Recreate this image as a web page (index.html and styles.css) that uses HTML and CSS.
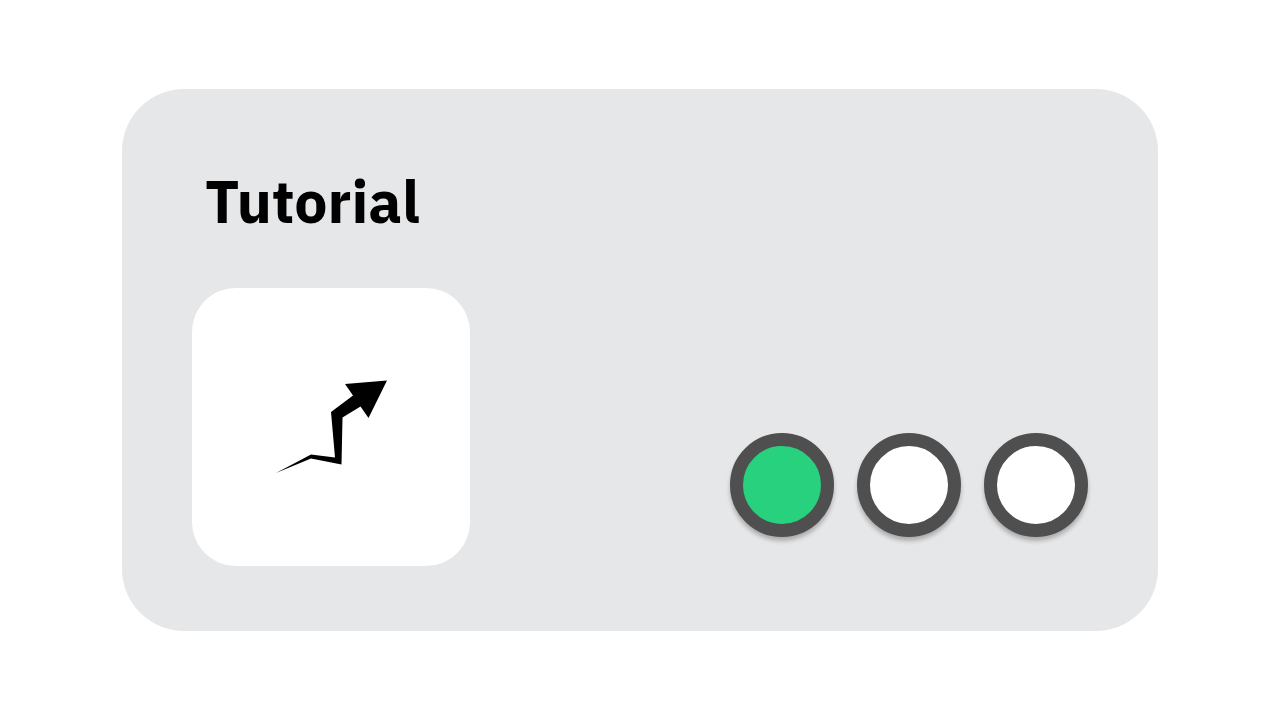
FILE: index.html
```
<!DOCTYPE html>
<html lang="en">
<head>
    <meta charset="UTF-8">
    <meta name="viewport" content="width=device-width, initial-scale=1.0">
    <title>Tutorial</title>
    <link rel="stylesheet" href="styles.css">
</head>
<body>

<main class="card">
    <h1>Tutorial</h1>
    <div class="card-content">
        <div class="tile">
            <svg class="arrow" viewBox="0 0 112 94" aria-hidden="true">
                <path d="M1 93 L36 74.500 L60 77.500 L56 32 L78 15.500 L70 4 L112 0.500 L93.500 38 L85.500 26.500 L67.500 37.500 L66.500 84.500 L36 78.500 Z"/>
            </svg>
        </div>
        <ol class="steps">
            <li class="step done" aria-label="Step 1"></li>
            <li class="step" aria-label="Step 2"></li>
            <li class="step" aria-label="Step 3"></li>
        </ol>
    </div>
</main>

</body>
</html>
```

FILE: styles.css
```
body {
    font-family: "IBM Plex Sans", Inter, "Liberation Sans", sans-serif;
    margin: 0;
    min-height: 100vh;
    display: flex;
    align-items: center;
    background-color: #fff;
}

.card {
    flex: 1;
    box-sizing: border-box;
    margin: 0 122px;
    padding: 72px 70px 65px;
    border-radius: 62px;
    background-color: #e6e7e9;
}

.card h1 {
    margin: 0 13px 47px;
    font-size: 59px;
    line-height: 80px;
    font-weight: 700;
    color: #000;
}

.card-content {
    display: flex;
    justify-content: space-between;
    align-items: flex-end;
}

.tile {
    display: flex;
    align-items: center;
    justify-content: center;
    width: 278px;
    height: 278px;
    border-radius: 44px;
    background-color: #fff;
}

.arrow {
    width: 112px;
    height: 94px;
}

/* progress circles */
.steps {
    display: flex;
    gap: 23px;
    margin: 0 0 29px;
    padding: 0;
    list-style: none;
}

.step {
    box-sizing: border-box;
    width: 104px;
    height: 104px;
    border: 13px solid #4f4f4f;
    border-radius: 50%;
    background-color: #fff;
    box-shadow: 0 4px 4px rgba(0, 0, 0, 0.25);
}

.step.done {
    background-color: #28d17e;
}
```
